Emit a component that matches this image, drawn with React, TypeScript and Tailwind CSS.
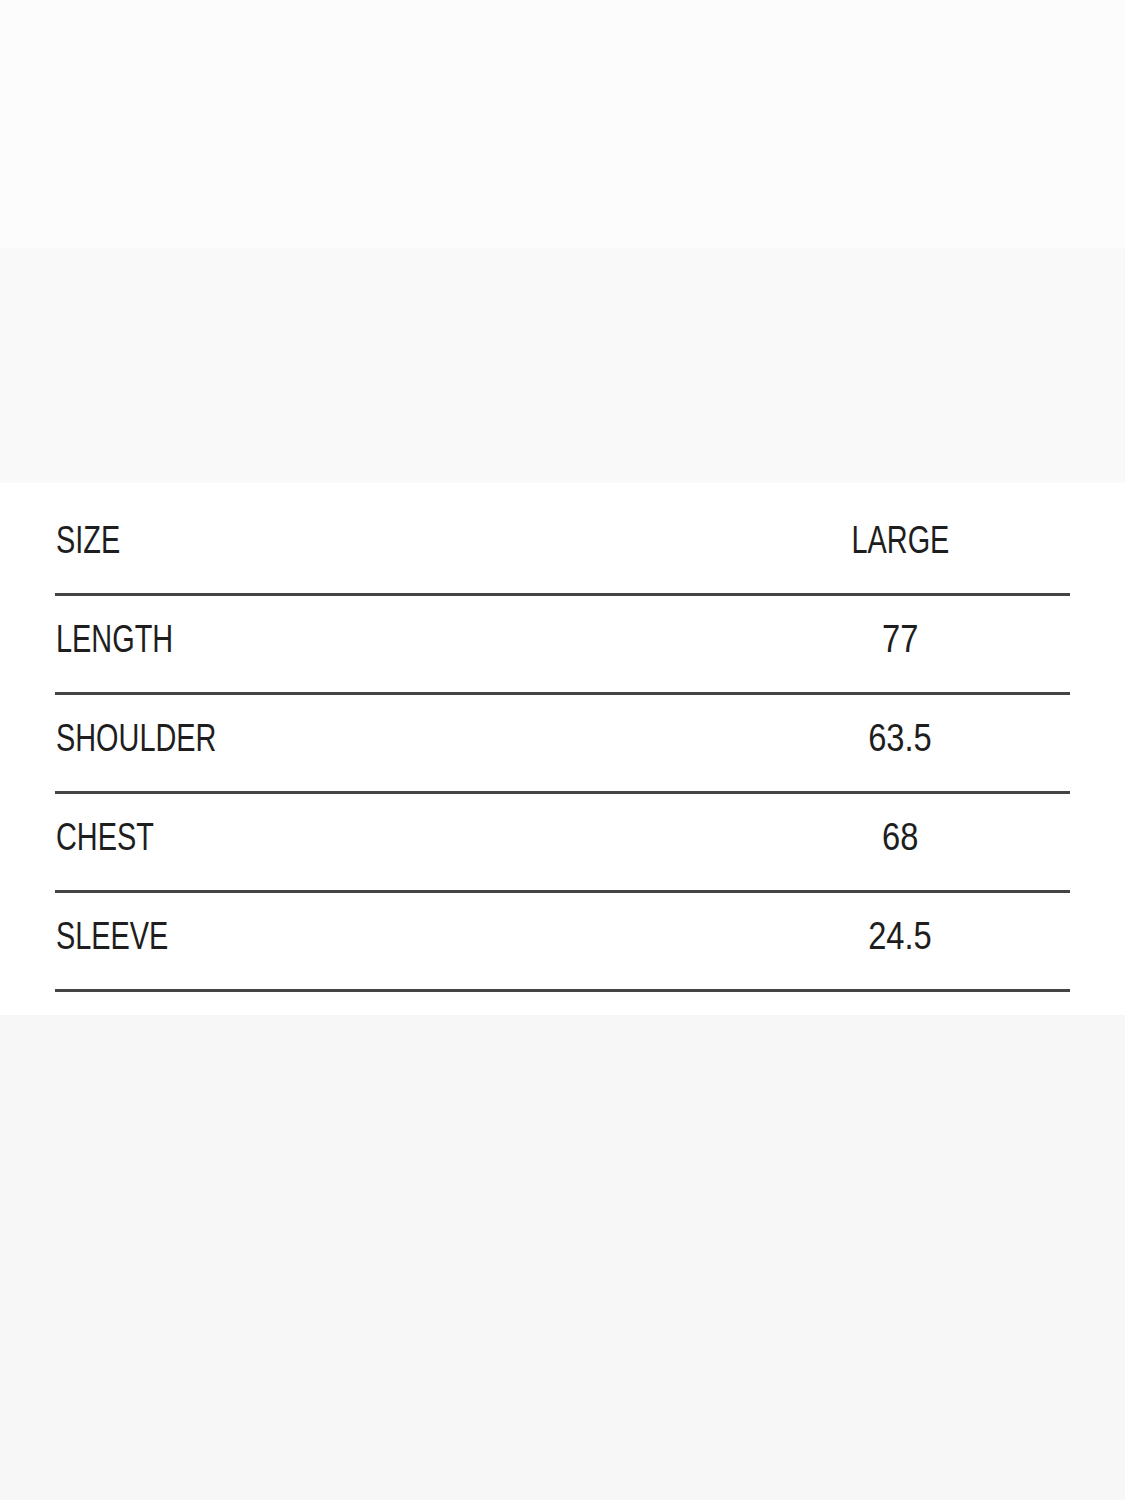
const rows = [
  { label: "SIZE", value: "LARGE" },
  { label: "LENGTH", value: "77" },
  { label: "SHOULDER", value: "63.5" },
  { label: "CHEST", value: "68" },
  { label: "SLEEVE", value: "24.5" },
];

export default function App() {
  return (
    <div className="w-[1125px] h-[1500px] flex flex-col bg-[#f7f7f7] font-['Liberation_Sans_Narrow','Arial_Narrow','Liberation_Sans',sans-serif] text-[#1e1e1e]">
      <div className="h-[248px] bg-[#fcfcfc]" />
      <div className="h-[235px] bg-[#f9f9f9]" />
      {/* size table */}
      <div className="h-[532px] bg-white pt-[14px] pl-[55px] pr-[55px]">
        {rows.map((row) => (
          <div key={row.label} className="flex h-[99px] border-b-[3px] border-[#444]">
            <div className="flex-1 pt-[24px] pl-[1px] text-[38px] leading-[38px]">
              <span className="inline-block origin-left scale-x-[0.76]">{row.label}</span>
            </div>
            <div className="w-[340px] pt-[24px] text-center text-[38px] leading-[38px]">
              <span
                className={
                  row.value === "LARGE"
                    ? "inline-block origin-center scale-x-[0.76]"
                    : "inline-block origin-center scale-x-[0.86]"
                }
              >
                {row.value}
              </span>
            </div>
          </div>
        ))}
      </div>
      <div className="flex-1" />
    </div>
  );
}
